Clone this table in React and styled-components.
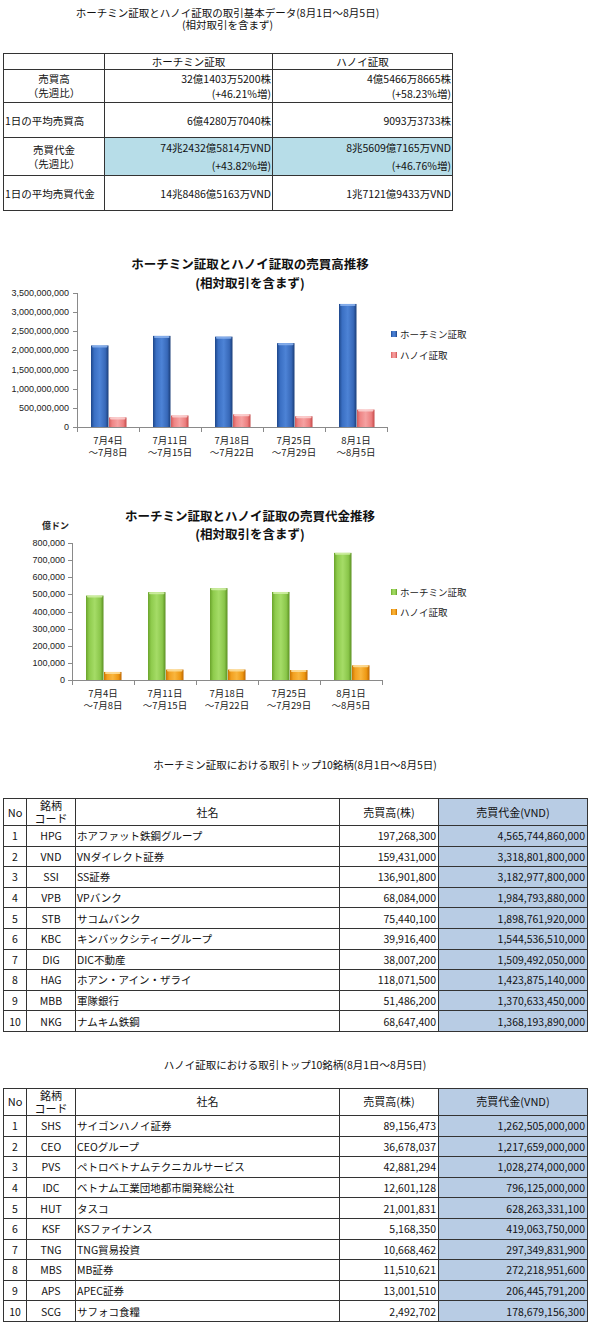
import React from "react";
import styled, { createGlobalStyle } from "styled-components";

const GlobalStyle = createGlobalStyle`
  html, body { margin: 0; padding: 0; background: #fff; }
  body {
    font-family: "Noto Sans CJK JP", "Noto Sans", sans-serif;
    color: #111;
  }
`;

const Page = styled.div`
  width: 597px;
  padding: 0 0 19px 3px;
  display: flex;
  flex-direction: column;
  align-items: flex-start;
`;

const Caption = styled.div`
  width: ${(p) => p.$width}px;
  margin-top: ${(p) => p.$top}px;
  text-align: center;
  font-size: 10.5px;
  line-height: 12px;
  white-space: pre-line;
`;

const Grid = styled.table`
  border-collapse: collapse;
  table-layout: fixed;
  width: ${(p) => p.$width}px;
  margin-top: ${(p) => p.$top}px;
  font-size: 10.5px;
`;

const Row = styled.tr`
  height: ${(p) => p.$h}px;
`;

const Cell = styled.td`
  border: 1px solid #333;
  padding: 0 ${(p) => (p.$pad != null ? p.$pad : 2)}px;
  text-align: ${(p) => p.$align || "left"};
  vertical-align: middle;
  background: ${(p) => p.$bg || "transparent"};
  line-height: ${(p) => p.$lh || 13}px;
  font-size: ${(p) => p.$fs || 10.5}px;
  white-space: pre;
  overflow: hidden;
`;

const ChartFrame = styled.div`
  margin-top: ${(p) => p.$top}px;
  margin-left: -3px;
  width: 500px;
  height: 230px;
  svg { display: block; }
`;

const AQUA = "#b7dde8";
const STEEL = "#b8cce4";

function BasicTable() {
  return (
    <Grid $width={449} $top={22}>
      <colgroup>
        <col style={{ width: 101 }} />
        <col style={{ width: 168 }} />
        <col style={{ width: 180 }} />
      </colgroup>
      <tbody>
        <Row $h={16}>
          <Cell />
          <Cell $align="center">ホーチミン証取</Cell>
          <Cell $align="center">ハノイ証取</Cell>
        </Row>
        <Row $h={33}>
          <Cell $align="center" $lh={14}>{"売買高\n（先週比）"}</Cell>
          <Cell $align="right" $lh={15} $pad={1}>{"32億1403万5200株\n(+46.21%増)"}</Cell>
          <Cell $align="right" $lh={15} $pad={1}>{"4億5466万8665株\n(+58.23%増)"}</Cell>
        </Row>
        <Row $h={35}>
          <Cell $pad={1}>1日の平均売買高</Cell>
          <Cell $align="right" $pad={1}>6億4280万7040株</Cell>
          <Cell $align="right" $pad={1}>9093万3733株</Cell>
        </Row>
        <Row $h={38}>
          <Cell $align="center" $lh={14}>{"売買代金\n（先週比）"}</Cell>
          <Cell $align="right" $lh={18} $pad={1} $bg={AQUA}>{"74兆2432億5814万VND\n(+43.82%増)"}</Cell>
          <Cell $align="right" $lh={18} $pad={1} $bg={AQUA}>{"8兆5609億7165万VND\n(+46.76%増)"}</Cell>
        </Row>
        <Row $h={35}>
          <Cell $pad={1}>1日の平均売買代金</Cell>
          <Cell $align="right" $pad={1}>14兆8486億5163万VND</Cell>
          <Cell $align="right" $pad={1}>1兆7121億9433万VND</Cell>
        </Row>
      </tbody>
    </Grid>
  );
}

function RankTable({ rows, top }) {
  return (
    <Grid $width={584} $top={top}>
      <colgroup>
        <col style={{ width: 23 }} />
        <col style={{ width: 49 }} />
        <col style={{ width: 264 }} />
        <col style={{ width: 99 }} />
        <col style={{ width: 149 }} />
      </colgroup>
      <tbody>
        <Row $h={26}>
          <Cell $align="center" $pad={0} $fs={11}>No</Cell>
          <Cell $align="center" $pad={0} $fs={11} $lh={13}>{"銘柄\nコード"}</Cell>
          <Cell $align="center" $fs={11}>社名</Cell>
          <Cell $align="center" $fs={11}>売買高(株)</Cell>
          <Cell $align="center" $fs={11} $bg={STEEL}>売買代金(VND)</Cell>
        </Row>
        {rows.map((r, i) => (
          <Row key={r[1]} $h={20.6}>
            <Cell $align="center" $pad={0}>{i + 1}</Cell>
            <Cell $align="center" $pad={0}>{r[1]}</Cell>
            <Cell $pad={1}>{r[2]}</Cell>
            <Cell $align="right" $pad={2}>{r[3]}</Cell>
            <Cell $align="right" $pad={2} $bg={STEEL}>{r[4]}</Cell>
          </Row>
        ))}
      </tbody>
    </Grid>
  );
}

const HCM_ROWS = [
  [1, "HPG", "ホアファット鉄鋼グループ", "197,268,300", "4,565,744,860,000"],
  [2, "VND", "VNダイレクト証券", "159,431,000", "3,318,801,800,000"],
  [3, "SSI", "SS証券", "136,901,800", "3,182,977,800,000"],
  [4, "VPB", "VPバンク", "68,084,000", "1,984,793,880,000"],
  [5, "STB", "サコムバンク", "75,440,100", "1,898,761,920,000"],
  [6, "KBC", "キンバックシティーグループ", "39,916,400", "1,544,536,510,000"],
  [7, "DIG", "DIC不動産", "38,007,200", "1,509,492,050,000"],
  [8, "HAG", "ホアン・アイン・ザライ", "118,071,500", "1,423,875,140,000"],
  [9, "MBB", "軍隊銀行", "51,486,200", "1,370,633,450,000"],
  [10, "NKG", "ナムキム鉄鋼", "68,647,400", "1,368,193,890,000"],
];

const HN_ROWS = [
  [1, "SHS", "サイゴンハノイ証券", "89,156,473", "1,262,505,000,000"],
  [2, "CEO", "CEOグループ", "36,678,037", "1,217,659,000,000"],
  [3, "PVS", "ペトロベトナムテクニカルサービス", "42,881,294", "1,028,274,000,000"],
  [4, "IDC", "ベトナム工業団地都市開発総公社", "12,601,128", "796,125,000,000"],
  [5, "HUT", "タスコ", "21,001,831", "628,263,331,100"],
  [6, "KSF", "KSファイナンス", "5,168,350", "419,063,750,000"],
  [7, "TNG", "TNG貿易投資", "10,668,462", "297,349,831,900"],
  [8, "MBS", "MB証券", "11,510,621", "272,218,951,600"],
  [9, "APS", "APEC証券", "13,001,510", "206,445,791,200"],
  [10, "SCG", "サフォコ食糧", "2,492,702", "178,679,156,300"],
];

const CATS = [
  ["7月4日", "～7月8日"],
  ["7月11日", "～7月15日"],
  ["7月18日", "～7月22日"],
  ["7月25日", "～7月29日"],
  ["8月1日", "～8月5日"],
];

const fmt = (n) => n.toLocaleString("en-US");

function BarChart({ id, cfg }) {
  const { titleY, unit, axisX, top, bottom, max, step, labelRight, catY, legendY, series } = cfg;
  const scale = (bottom - top) / max;
  const ticks = [];
  for (let v = 0; v <= max; v += step) ticks.push(v);
  const plotW = 310;
  const cat = 62;
  const CJK = '"Noto Sans CJK JP", sans-serif';
  const NUM = '"Liberation Sans", "Noto Sans", sans-serif';
  return (
    <svg width="500" height="230" viewBox="0 0 500 230">
      <defs>
        {series.map((s, k) => (
          <linearGradient key={k} id={`${id}-g${k}`} x1="0" y1="0" x2="1" y2="0">
            {s.stops.map((c, j) => (
              <stop key={j} offset={[0, 0.18, 0.5, 0.82, 1][j]} stopColor={c} />
            ))}
          </linearGradient>
        ))}
      </defs>
      <g fontFamily={CJK} fontWeight="bold" fontSize="12.5" fill="#111" textAnchor="middle">
        <text x="250" y={titleY[0]} dominantBaseline="central">{cfg.title}</text>
        <text x="250" y={titleY[1]} dominantBaseline="central">(相対取引を含まず)</text>
      </g>
      {unit && (
        <text x={unit.x} y={unit.y} fontFamily={CJK} fontSize="9" fontWeight="bold" fill="#222" dominantBaseline="central">
          {unit.text}
        </text>
      )}
      <g stroke="#8a8a8a" strokeWidth="1" shapeRendering="crispEdges">
        <line x1={axisX + 0.5} y1={top} x2={axisX + 0.5} y2={bottom} />
        <line x1={axisX} y1={bottom + 0.5} x2={axisX + plotW} y2={bottom + 0.5} />
        {ticks.map((v) => {
          const y = Math.round(bottom - v * scale) + 0.5;
          return <line key={v} x1={axisX - 4} y1={y} x2={axisX} y2={y} />;
        })}
        {[0, 1, 2, 3, 4, 5].map((i) => (
          <line key={i} x1={axisX + i * cat + 0.5} y1={bottom} x2={axisX + i * cat + 0.5} y2={bottom + 5} />
        ))}
      </g>
      <g fontFamily={NUM} fontSize="9" fill="#222" textAnchor="end">
        {ticks.map((v) => (
          <text key={v} x={labelRight} y={bottom - v * scale} dominantBaseline="central">
            {fmt(v)}
          </text>
        ))}
      </g>
      {series.map((s, k) =>
        s.values.map((v, i) => {
          const h = v * scale;
          const x = axisX + i * cat + 14 + k * 18;
          const y = bottom - h;
          return (
            <g key={`${k}-${i}`}>
              <rect x={x} y={y} width="17.5" height={h} fill={`url(#${id}-g${k})`} />
              <rect x={x + 1} y={y} width="15.5" height="2" rx="1" fill={s.cap} opacity="0.85" />
            </g>
          );
        })
      )}
      <g fontFamily={CJK} fontSize="9.5" fill="#222" textAnchor="middle">
        {CATS.map((c, i) => (
          <g key={i}>
            <text x={axisX + i * cat + 31} y={catY} dominantBaseline="central">{c[0]}</text>
            <text x={axisX + i * cat + 31} y={catY + 12} dominantBaseline="central">{c[1]}</text>
          </g>
        ))}
      </g>
      {series.map((s, k) => (
        <g key={k}>
          <rect x="391" y={legendY[k] - 3} width="6" height="6" fill={`url(#${id}-g${k})`} />
          <text x="400" y={legendY[k]} fontFamily={CJK} fontSize="9.5" fill="#222" dominantBaseline="central">
            {s.name}
          </text>
        </g>
      ))}
    </svg>
  );
}

const VOLUME = {
  title: "ホーチミン証取とハノイ証取の売買高推移",
  titleY: [23, 42],
  axisX: 77,
  top: 53,
  bottom: 187,
  max: 3500000000,
  step: 500000000,
  labelRight: 69,
  catY: 200,
  legendY: [94, 115],
  series: [
    {
      name: "ホーチミン証取",
      values: [2130000000, 2380000000, 2360000000, 2190000000, 3214035200],
      stops: ["#1d4689", "#3a6fc3", "#4d83d6", "#3768b8", "#1a3d78"],
      cap: "#8db4ee",
    },
    {
      name: "ハノイ証取",
      values: [250000000, 300000000, 330000000, 280000000, 454668665],
      stops: ["#d45a5a", "#ee8585", "#f5a2a2", "#ec7f7f", "#c44848"],
      cap: "#fcd3d3",
    },
  ],
};

const VALUE = {
  title: "ホーチミン証取とハノイ証取の売買代金推移",
  titleY: [15, 33],
  unit: { x: 42, y: 25, text: "億ドン" },
  axisX: 72,
  top: 43,
  bottom: 180,
  max: 800000,
  step: 100000,
  labelRight: 65,
  catY: 193,
  legendY: [92, 112],
  series: [
    {
      name: "ホーチミン証取",
      values: [493000, 513000, 536000, 514000, 742432],
      stops: ["#6aa32b", "#8ecb4c", "#a5dc67", "#8ac64a", "#5b9022"],
      cap: "#d2f0a8",
    },
    {
      name: "ハノイ証取",
      values: [47000, 61000, 61000, 58000, 85609],
      stops: ["#cc7400", "#f2a020", "#f9b63e", "#ee9812", "#bd6600"],
      cap: "#fde0a0",
    },
  ],
};

export default function App() {
  return (
    <>
      <GlobalStyle />
      <Page>
        <Caption $width={449} $top={7}>
          {"ホーチミン証取とハノイ証取の取引基本データ(8月1日～8月5日)\n(相対取引を含まず)"}
        </Caption>
        <BasicTable />
        <ChartFrame $top={29}>
          <BarChart id="vol" cfg={VOLUME} />
        </ChartFrame>
        <ChartFrame $top={30}>
          <BarChart id="val" cfg={VALUE} />
        </ChartFrame>
        <Caption $width={584} $top={29}>
          ホーチミン証取における取引トップ10銘柄(8月1日～8月5日)
        </Caption>
        <RankTable rows={HCM_ROWS} top={27} />
        <Caption $width={584} $top={27}>
          ハノイ証取における取引トップ10銘柄(8月1日～8月5日)
        </Caption>
        <RankTable rows={HN_ROWS} top={17} />
      </Page>
    </>
  );
}
